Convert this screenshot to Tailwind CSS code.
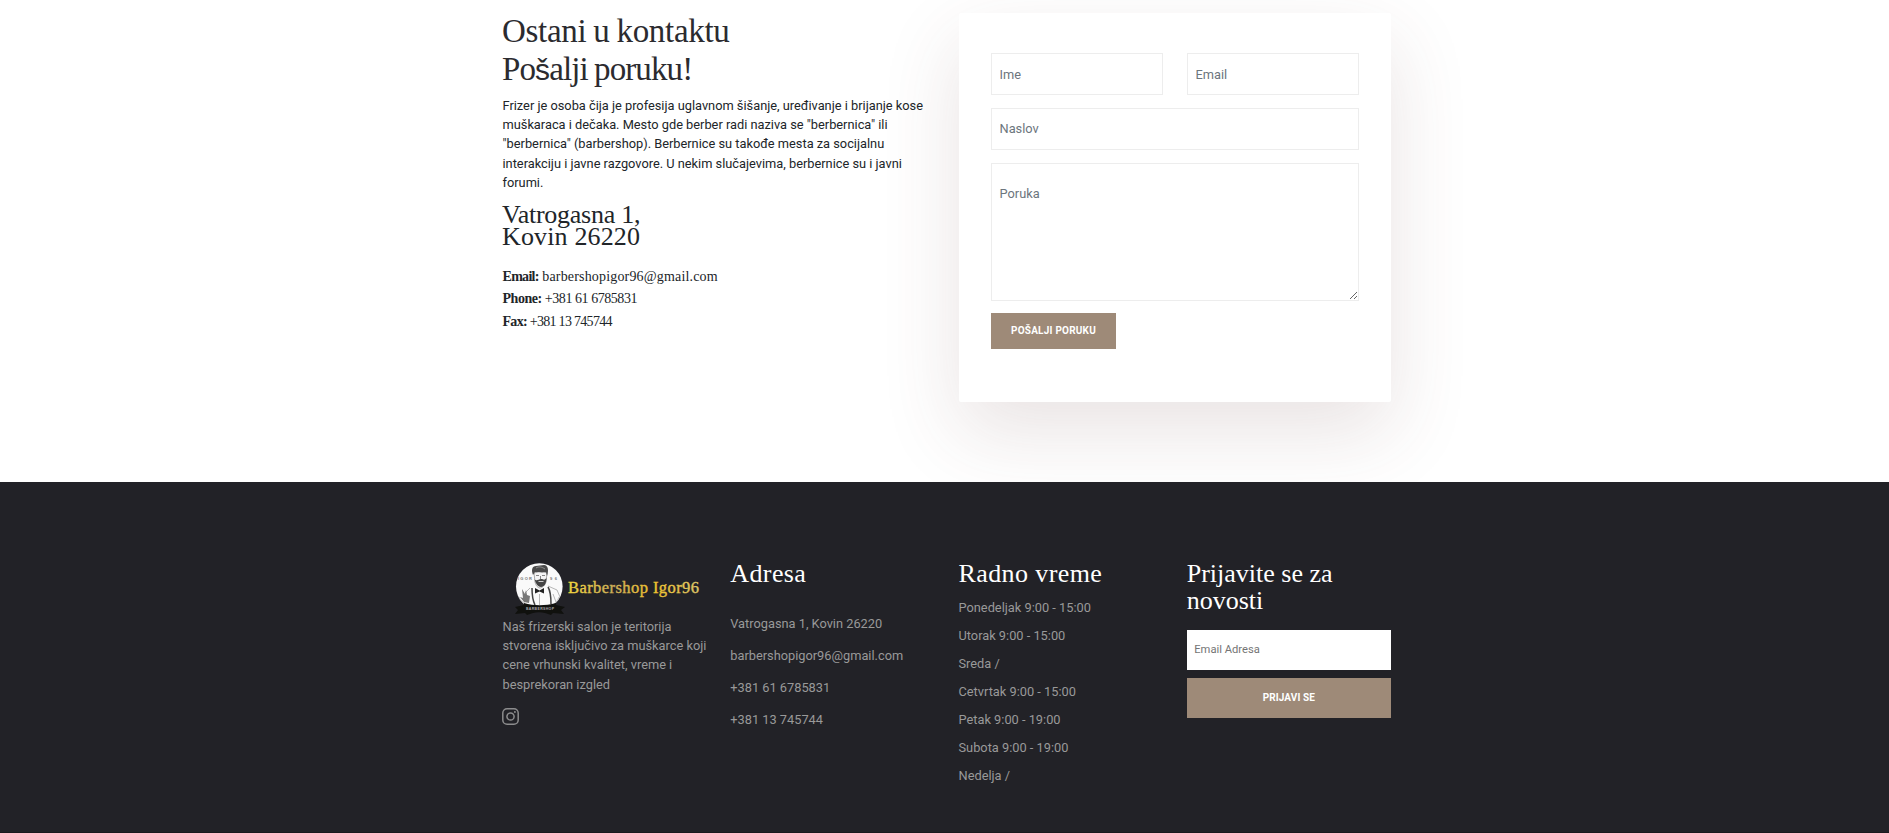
<!DOCTYPE html>
<html lang="sr">
<head>
<meta charset="utf-8">
<title>Barbershop Igor96</title>
<script src="https://cdn.jsdelivr.net/npm/@tailwindcss/browser@4"></script>
</head>
<body class="h-[833px] overflow-hidden bg-white font-['Roboto','Liberation_Sans',sans-serif] text-[12.8px] leading-[19.2px] text-[#212529]">
<section class="h-[482px] pt-[13px] pl-[502px]">
  <div class="flex w-[889px] gap-6">
    <div class="w-[433px] shrink-0">
      <h2 class="-mt-px font-['Liberation_Serif',serif] text-[33px] leading-[38px] text-[#2b2b2f] [word-spacing:-1px]">
        <span class="block w-max tracking-[-0.3px]">Ostani u kontaktu</span>
        <span class="block w-max tracking-[-0.9px]">Po<span class="font-['Liberation_Sans',sans-serif] text-[30px]">š</span>alji poruku!</span>
      </h2>
      <p class="mt-[7px] pl-[0.5px] whitespace-nowrap">Frizer je osoba čija je profesija uglavnom šišanje, uređivanje i brijanje kose<br>muškaraca i dečaka. Mesto gde berber radi naziva se "berbernica" ili<br>"berbernica" (barbershop). Berbernice su takođe mesta za socijalnu<br>interakciju i javne razgovore. U nekim slučajevima, berbernice su i javni<br>forumi.</p>
      <h3 class="mt-[12px] font-['Liberation_Serif',serif] text-[26px] leading-[22px]"><span class="block w-max tracking-[-0.25px]">Vatrogasna 1,</span><span class="block w-max tracking-[0.15px]">Kovin 26220</span></h3>
      <div class="mt-[18px] pl-[0.5px] font-['Liberation_Serif',serif] text-[14px] leading-[22.4px]">
        <p class="w-max"><b class="tracking-[-0.7px]">Email:</b> <span class="tracking-[0.17px]">barbershopigor96@gmail.com</span></p>
        <p class="w-max tracking-[-0.45px]"><b>Phone:</b> +381 61 6785831</p>
        <p class="w-max tracking-[-0.7px]"><b>Fax:</b> +381 13 745744</p>
      </div>
    </div>
    <form class="h-[389px] w-[432px] shrink-0 rounded-[2px] bg-white px-8 pt-10 shadow-[0_30px_80px_0_rgba(100,55,55,0.14)]">
      <div class="grid grid-cols-2 gap-x-6 gap-y-[13px]">
        <input class="h-[42px] w-full border border-[#ededed] px-[7.5px] placeholder:text-[#6c757d]" placeholder="Ime">
        <input class="h-[42px] w-full border border-[#ededed] px-[7.5px] placeholder:text-[#6c757d]" placeholder="Email">
        <input class="col-span-2 h-[42px] w-full border border-[#ededed] px-[7.5px] pb-px placeholder:text-[#6c757d]" placeholder="Naslov">
        <textarea class="col-span-2 h-[138px] w-full resize border border-[#ededed] px-[7.5px] pt-5 placeholder:text-[#6c757d]" placeholder="Poruka"></textarea>
      </div>
      <button type="button" class="mt-[12px] block h-[36px] w-[125px] bg-[#9e8a78] pb-px text-[10px] font-bold tracking-[0.22px] text-white">POŠALJI PORUKU</button>
    </form>
  </div>
</section>
<footer class="relative h-[351px] border-b border-[#1a1a1e] bg-[#222227] pt-[79px] pl-[502px] text-[#999999]">
  <div class="grid w-[889px] grid-cols-4 gap-6">
    <div class="min-w-0">
      <svg class="block h-[56px] w-[204px]" viewBox="0 0 204 56">
        <defs>
          <linearGradient id="gold" x1="0" x2="1"><stop offset="0" stop-color="#f2d63d"/><stop offset=".35" stop-color="#cdb05a"/><stop offset=".65" stop-color="#f0c22c"/><stop offset="1" stop-color="#dcc86a"/></linearGradient>
        </defs>
        <circle cx="37.300" cy="25.500" r="23.300" fill="#fafafa"/>
        <path d="M32 12l1 9c1 4 3 6 5 6s5-3 6-6l1-9-5-2z" fill="#f4f4f4" stroke="#777" stroke-width=".6"/>
        <path d="M31 14c-2-5-1-9 3-9l8-1c4 0 5 5 3 11l-1-4c-4 1-8 0-11 0z" fill="#4a4a4a"/>
        <path d="M34 7c3-2 6-1 9 1" fill="none" stroke="#aaa" stroke-width=".7"/>
        <path d="M34 14.500h3M40 14.500h3M38.500 15v3" fill="none" stroke="#555" stroke-width=".7"/>
        <path d="M32.500 18c2 3 4 0 6.500 0s3 2 5.500-1c0 5-2 9-5.500 9s-5.500-4-6.500-8z" fill="#444"/>
        <path d="M36.500 20.500h5" stroke="#eee" stroke-width=".8"/>
        <path d="M33 27l4.500 2.500L42 27v5.500L37.500 30.500 33 32.500z" fill="#222"/>
        <path d="M30 27c0 6 0 11 3 17M46 26c3 5 3 11 3 17" fill="none" stroke="#444" stroke-width="1.500"/>
        <path d="M37.500 33v11M28 27l-5 5M46 25l9 4 3 7M51 33l3 8" fill="none" stroke="#999" stroke-width=".7"/>
        <path d="M20 28l3 5 1-4 1 5 3 1-1 7-5-1-4-5 3 1z" fill="#777"/>
        <path d="M23 42c-3-1-5-3-6-6M57 36c-1 3-3 5-5 7" fill="none" stroke="#aaa" stroke-width=".7"/>
        <path d="M13 46l9-2v-2c10 3 21 3 32 0v2l9 2-4 3 3 4-11-1-2 2-6-2c-4-1-8-1-12 0l-6 2-2-2-10 1 3-4z" fill="#10110e"/>
        <text x="16" y="18.500" font-family="Liberation Sans" font-size="4" font-weight="700" textLength="14" fill="#777">IGOR</text>
        <text x="48" y="18.500" font-family="Liberation Sans" font-size="4" font-weight="700" textLength="7" fill="#777">96</text>
        <text x="24" y="48.500" font-family="Liberation Sans" font-size="3.500" font-weight="700" fill="#aaa" textLength="28">BARBERSHOP</text>
        <text x="66" y="32" font-family="Liberation Serif" font-size="16.500" fill="url(#gold)" textLength="131" stroke="url(#gold)" stroke-width=".35">Barbershop Igor96</text>
      </svg>
      <p class="pl-[0.5px] whitespace-nowrap">Naš frizerski salon je teritorija<br>stvorena isključivo za muškarce koji<br>cene vrhunski kvalitet, vreme i<br>besprekoran izgled</p>
      <svg class="mt-[14px] block size-[17px]" viewBox="0 0 17 17" fill="none" stroke="#8c8c8d" stroke-width="1.500"><rect x=".8" y=".8" width="15.400" height="15.400" rx="4.300"/><circle cx="8.500" cy="8.500" r="3.600"/><circle cx="12.900" cy="4.100" r=".4" stroke-width="1.200"/></svg>
    </div>
    <div class="min-w-0">
      <h4 class="h-[27px] font-['Liberation_Serif',serif] text-[26px] leading-[26px] tracking-[0.4px] text-white">Adresa</h4>
      <div class="mt-[20px] leading-8"><p>Vatrogasna 1, Kovin 26220</p><p>barbershopigor96@gmail.com</p><p>+381 61 6785831</p><p>+381 13 745744</p></div>
    </div>
    <div class="min-w-0">
      <h4 class="h-[27px] font-['Liberation_Serif',serif] text-[26px] leading-[26px] tracking-[0.4px] text-white">Radno vreme</h4>
      <div class="mt-[6px] leading-[28px]"><p>Ponedeljak 9:00 - 15:00</p><p>Utorak 9:00 - 15:00</p><p>Sreda /</p><p>Cetvrtak 9:00 - 15:00</p><p>Petak 9:00 - 19:00</p><p>Subota 9:00 - 19:00</p><p>Nedelja /</p></div>
    </div>
    <div class="min-w-0">
      <h4 class="h-[54px] font-['Liberation_Serif',serif] text-[26px] leading-[26.5px] text-white"><span class="block w-max">Prijavite se za</span><span class="block w-max">novosti</span></h4>
      <input class="mt-[15px] block h-[40px] w-full bg-white px-[7.5px] pb-px text-[11.2px] placeholder:text-[#757575]" placeholder="Email Adresa">
      <button type="button" class="mt-2 block h-[40px] w-full bg-[#9e8a78] pb-px text-[10px] font-bold tracking-[0.1px] text-white">PRIJAVI SE</button>
    </div>
  </div>
</footer>
</body>
</html>
